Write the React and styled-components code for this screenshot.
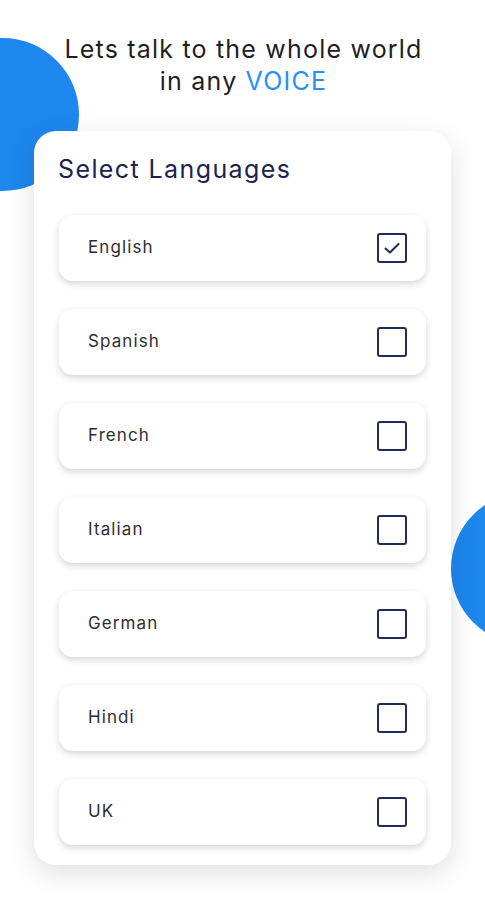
import React, { useState } from 'react';
import styled, { createGlobalStyle } from 'styled-components';

const GlobalStyle = createGlobalStyle`
  html, body {
    margin: 0;
    padding: 0;
    background: #fff;
    font-family: 'Inter', 'Noto Sans', sans-serif;
  }
`

const Page = styled.div`
  position: relative;
  width: 485px;
  height: 900px;
  overflow: hidden;
  background: #fff;
  display: flex;
  flex-direction: column;
  align-items: center;
  padding-top: 33px;
  box-sizing: border-box;
`

const Blob = styled.div`
  position: absolute;
  width: 153px;
  height: 153px;
  border-radius: 50%;
  background: #1d87ee;
  left: ${({ left }) => left}px;
  top: ${({ top }) => top}px;
  z-index: 0;
`

const Headline = styled.h1`
  position: relative;
  z-index: 1;
  margin: 0 0 0 2px;
  font-size: 25px;
  line-height: 32px;
  font-weight: 400;
  color: #1f1f1f;
  text-align: center;
  letter-spacing: 1.2px;
`

const Accent = styled.span`
  color: #2a8ff0;
`

const Card = styled.div`
  position: relative;
  z-index: 1;
  margin-top: 34px;
  width: 417px;
  box-sizing: border-box;
  background: #fff;
  border-radius: 22px;
  box-shadow: 0 8px 28px rgba(0, 0, 0, 0.13);
  padding: 22px 25px 20px 25px;
  display: flex;
  flex-direction: column;
  gap: 28px;
`

const Title = styled.h2`
  margin: 0 0 2px -1px;
  font-size: 25px;
  line-height: 32px;
  font-weight: 400;
  color: #1c2250;
  letter-spacing: 1.4px;
`

const Row = styled.label`
  display: flex;
  align-items: center;
  justify-content: space-between;
  height: 66px;
  padding: 0 19px 0 29px;
  background: #fff;
  border-radius: 14px;
  box-shadow: 0 3px 7px rgba(0, 0, 0, 0.16);
  cursor: pointer;
`

const Name = styled.span`
  font-size: 17px;
  color: #2e2e2e;
  letter-spacing: 1.1px;
  margin-top: -3px;
`

const Box = styled.span`
  width: 30px;
  height: 30px;
  box-sizing: border-box;
  border: 2px solid #1f2b58;
  border-radius: 3px;
  display: flex;
  align-items: center;
  justify-content: center;
`

const languages = ['English', 'Spanish', 'French', 'Italian', 'German', 'Hindi', 'UK'];

export default function App() {
  const [selected, setSelected] = useState({ English: true });

  return (
    <Page>
      <GlobalStyle />
      <Blob left={-74} top={38} />
      <Blob left={451} top={492} />
      <Headline>
        Lets talk to the whole world<br />
        in any <Accent>VOICE</Accent>
      </Headline>
      <Card>
        <Title>Select Languages</Title>
        {languages.map((lang) => (
          <Row key={lang} onClick={() => setSelected({ ...selected, [lang]: !selected[lang] })}>
            <Name>{lang}</Name>
            <Box>
              {selected[lang] && (
                <svg width="18" height="14" viewBox="0 0 18 14" fill="none">
                  <path d="M2.5 7.5 L7 11.5 L15.5 3" stroke="#1f2b58" strokeWidth="2" strokeLinecap="round" strokeLinejoin="round" />
                </svg>
              )}
            </Box>
          </Row>
        ))}
      </Card>
    </Page>
  );
}
